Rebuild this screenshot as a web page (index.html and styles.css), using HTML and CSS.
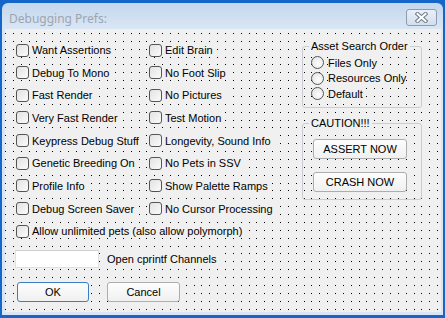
FILE: index.html
```html
<!DOCTYPE html>
<html lang="en">
<head>
  <meta charset="UTF-8">
  <title>Debugging Prefs</title>
  <link rel="stylesheet" href="styles.css">
</head>
<body>
  <div class="window">
    <!-- Title Bar -->
    <div class="titlebar">
      <span class="title">Debugging Prefs:</span>
      <button class="close" type="button">
        <svg width="13" height="11" viewBox="0 0 13 11">
          <path d="M2.5 2 L10.5 9 M10.5 2 L2.5 9" stroke="#6f7b8b" stroke-width="4" stroke-linecap="square"/>
          <path d="M2.5 2 L10.5 9 M10.5 2 L2.5 9" stroke="#fff" stroke-width="2" stroke-linecap="square"/>
        </svg>
      </button>
    </div>

    <!-- Dialog Body -->
    <div class="client">
      <div class="top">
        <div class="col col-left">
          <label class="check"><input type="checkbox"><span>Want Assertions</span></label>
          <label class="check"><input type="checkbox"><span>Debug To Mono</span></label>
          <label class="check"><input type="checkbox"><span>Fast Render</span></label>
          <label class="check"><input type="checkbox"><span>Very Fast Render</span></label>
          <label class="check"><input type="checkbox"><span>Keypress Debug Stuff</span></label>
          <label class="check"><input type="checkbox"><span>Genetic Breeding On</span></label>
          <label class="check"><input type="checkbox"><span>Profile Info</span></label>
          <label class="check"><input type="checkbox"><span>Debug Screen Saver</span></label>
        </div>
        <div class="col col-mid">
          <label class="check"><input type="checkbox"><span>Edit Brain</span></label>
          <label class="check"><input type="checkbox"><span>No Foot Slip</span></label>
          <label class="check"><input type="checkbox"><span>No Pictures</span></label>
          <label class="check"><input type="checkbox"><span>Test Motion</span></label>
          <label class="check"><input type="checkbox"><span>Longevity, Sound Info</span></label>
          <label class="check"><input type="checkbox"><span>No Pets in SSV</span></label>
          <label class="check"><input type="checkbox"><span>Show Palette Ramps</span></label>
          <label class="check"><input type="checkbox"><span>No Cursor Processing</span></label>
        </div>
        <div class="col-right">
          <fieldset class="group asset">
            <legend>Asset Search Order</legend>
            <label class="radio"><input type="radio" name="order"><span>Files Only</span></label>
            <label class="radio"><input type="radio" name="order"><span>Resources Only</span></label>
            <label class="radio"><input type="radio" name="order"><span>Default</span></label>
          </fieldset>
          <fieldset class="group caution">
            <legend>CAUTION!!!</legend>
            <button class="btn wide" type="button">ASSERT NOW</button>
            <button class="btn wide" type="button">CRASH NOW</button>
          </fieldset>
        </div>
      </div>

      <label class="check allow"><input type="checkbox"><span>Allow unlimited pets (also allow polymorph)</span></label>

      <div class="field-row">
        <input type="text" class="channels">
        <span class="field-label">Open cprintf Channels</span>
      </div>

      <div class="actions">
        <button class="btn default" type="button">OK</button>
        <button class="btn cancel" type="button">Cancel</button>
      </div>
    </div>
  </div>
</body>
</html>
```

FILE: styles.css
```css
body {
  margin: 0;
  background: #1467c9;
  font-family: "Liberation Sans", Arial, sans-serif;
  font-size: 11px;
  color: #000;
}
.window {
  margin: 3px 2px;
  height: 312px;
  display: flex;
  flex-direction: column;
  background: linear-gradient(#c5d7ee, #d9e6f4 26px, #d9e5f2);
  border-radius: 6px 6px 0 0;
}
.titlebar {
  height: 26px;
  flex: none;
  display: flex;
  justify-content: space-between;
  align-items: flex-start;
  padding: 0 6px 0 7px;
}
.title {
  font-family: "Noto Sans", sans-serif;
  font-size: 12px;
  line-height: 16px;
  margin-top: 8px;
  color: #9da5af;
}
.close {
  width: 31px;
  height: 17px;
  margin-top: 6px;
  padding: 0;
  border: 1px solid #8e9cb0;
  border-radius: 3px;
  background: linear-gradient(#e8eff8, #d3dfee);
  display: flex;
  align-items: center;
  justify-content: center;
}
.client {
  flex: 1;
  margin: 0 2px 3px 3px;
  padding: 11px 0 0 10px;
  background: #f0f0f0 url("data:image/svg+xml,<svg xmlns='http://www.w3.org/2000/svg' width='55' height='63'><g id='r'><rect width='1' height='1'/><rect x='8' width='1' height='1'/><rect x='16' width='1' height='1'/><rect x='24' width='1' height='1'/><rect x='31' width='1' height='1'/><rect x='39' width='1' height='1'/><rect x='47' width='1' height='1'/></g><use href='%23r' y='8'/><use href='%23r' y='16'/><use href='%23r' y='24'/><use href='%23r' y='31'/><use href='%23r' y='39'/><use href='%23r' y='47'/><use href='%23r' y='55'/></svg>") 0 4px / 55px 63px repeat;
}
.top {
  display: flex;
  align-items: flex-start;
}
.col {
  display: flex;
  flex-direction: column;
  align-items: flex-start;
  gap: 8.67px;
  padding-top: 3px;
}
.col-left {
  width: 133px;
}
.col-mid {
  width: 154px;
}
.col-right {
  width: 120px;
}
.check {
  height: 14px;
  display: flex;
  align-items: center;
  gap: 3px;
  padding: 0 4px 0 1px;
  background: #f0f0f0;
  white-space: nowrap;
}
.check input {
  appearance: none;
  margin: 0;
  width: 13px;
  height: 13px;
  box-sizing: border-box;
  border: 1px solid #555;
  border-radius: 3px;
  background: linear-gradient(135deg, #e2e2e2, #fbfbfb);
}
.allow {
  display: inline-flex;
  margin-top: 8.67px;
}
.group {
  margin: 0;
  border: 1px solid #c9cdd1;
  border-radius: 3px;
  min-width: 0;
  box-sizing: border-box;
}
.group legend {
  padding: 0 2px;
  line-height: 13px;
  background: #f0f0f0;
  white-space: nowrap;
}
.asset {
  padding: 2px 0 5.5px 8px;
}
.asset legend {
  margin-left: -2px;
}
.radio {
  height: 15.5px;
  display: flex;
  align-items: center;
  gap: 4px;
}
.radio span,
.radio input {
  background: #f0f0f0;
}
.radio input {
  appearance: none;
  margin: 0;
  width: 13px;
  height: 13px;
  box-sizing: border-box;
  border: 1px solid #555;
  border-radius: 50%;
  background: radial-gradient(circle at 60% 60%, #fdfdfd, #e0e0e0);
}
.caution {
  margin-top: 9px;
  padding: 9px 0 7px 10px;
  display: flex;
  flex-direction: column;
  gap: 13px;
}
.caution legend {
  margin-left: -4px;
}
.btn {
  height: 20px;
  padding: 0;
  border: 1px solid #adadad;
  border-radius: 3px;
  background: linear-gradient(#fdfdfd, #f0f0f0);
  font-family: "Liberation Sans", Arial, sans-serif;
  font-size: 11px;
  color: #000;
}
.btn.wide {
  width: 94px;
}
.field-row {
  display: flex;
  align-items: center;
  margin-top: 10.67px;
}
.channels {
  width: 84px;
  height: 18px;
  box-sizing: border-box;
  margin: 0;
  border: 1px solid #e0e0e0;
  border-top-color: #cfcfcf;
  background: #fff;
}
.field-label {
  margin-left: 8px;
  padding-right: 2px;
  background: #f0f0f0;
  white-space: nowrap;
}
.actions {
  display: flex;
  gap: 18px;
  margin-top: 14px;
  padding-left: 2px;
}
.btn.default {
  width: 72px;
  border-color: #3a7fc6;
}
.btn.cancel {
  width: 73px;
}
```
